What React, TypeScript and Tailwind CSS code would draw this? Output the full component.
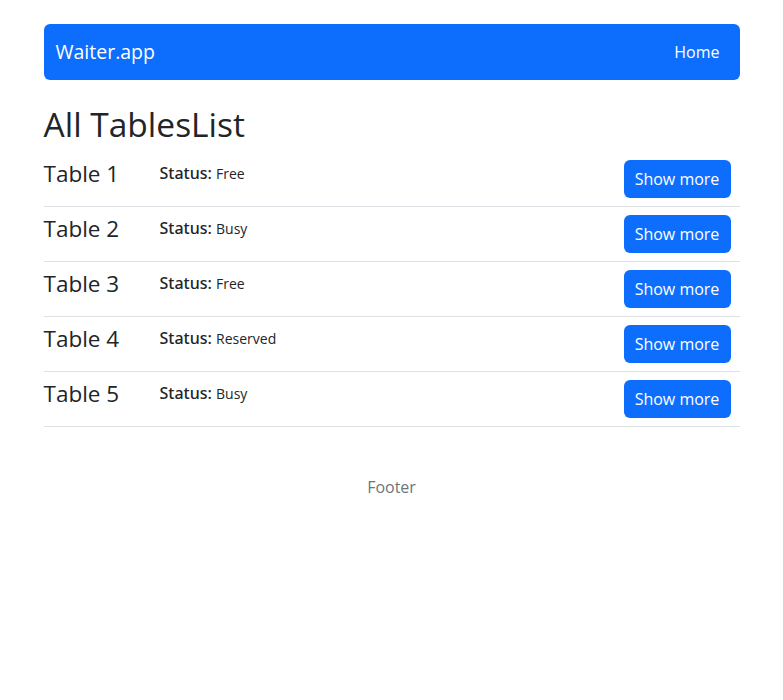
import React from "react";

const tables = [
  { id: 1, status: "Free" },
  { id: 2, status: "Busy" },
  { id: 3, status: "Free" },
  { id: 4, status: "Reserved" },
  { id: 5, status: "Busy" },
];

export default function App() {
  return (
    <div className="min-h-[700px] bg-white text-[#212529]" style={{ fontFamily: '"Open Sans", "Noto Sans", sans-serif' }}>
      <div className="mx-auto w-[720px] px-3">
        <nav className="mt-6 flex h-14 items-center justify-between rounded-md bg-[#0d6efd] px-3 text-white">
          <span className="text-[19.5px] leading-[30px]">Waiter.app</span>
          <a className="px-2 text-[16px] leading-6">Home</a>
        </nav>

        <h1 className="mt-6 mb-2 text-[33.5px] leading-[40px] font-medium">All TablesList</h1>

        <ul>
          {tables.map((t) => (
            <li key={t.id} className="flex h-[55px] items-start border-b border-[#dee2e6] pt-2">
              <h4 className="w-[116px] text-[22.5px] leading-[28px] font-medium">Table {t.id}</h4>
              <div className="flex-1 pt-[1px] text-[16px] leading-6">
                <span className="font-['Noto_Sans',sans-serif] font-medium">Status:</span> <span className="text-[14px]">{t.status}</span>
              </div>
              <button className="mr-[9px] flex h-[38px] w-[107px] items-center justify-center rounded-md bg-[#0d6efd] text-[16px] leading-6 text-white">Show more</button>
            </li>
          ))}
        </ul>

        <footer className="py-12 text-center text-[16px] leading-6 text-[#6c757d]">Footer</footer>
      </div>
    </div>
  );
}
